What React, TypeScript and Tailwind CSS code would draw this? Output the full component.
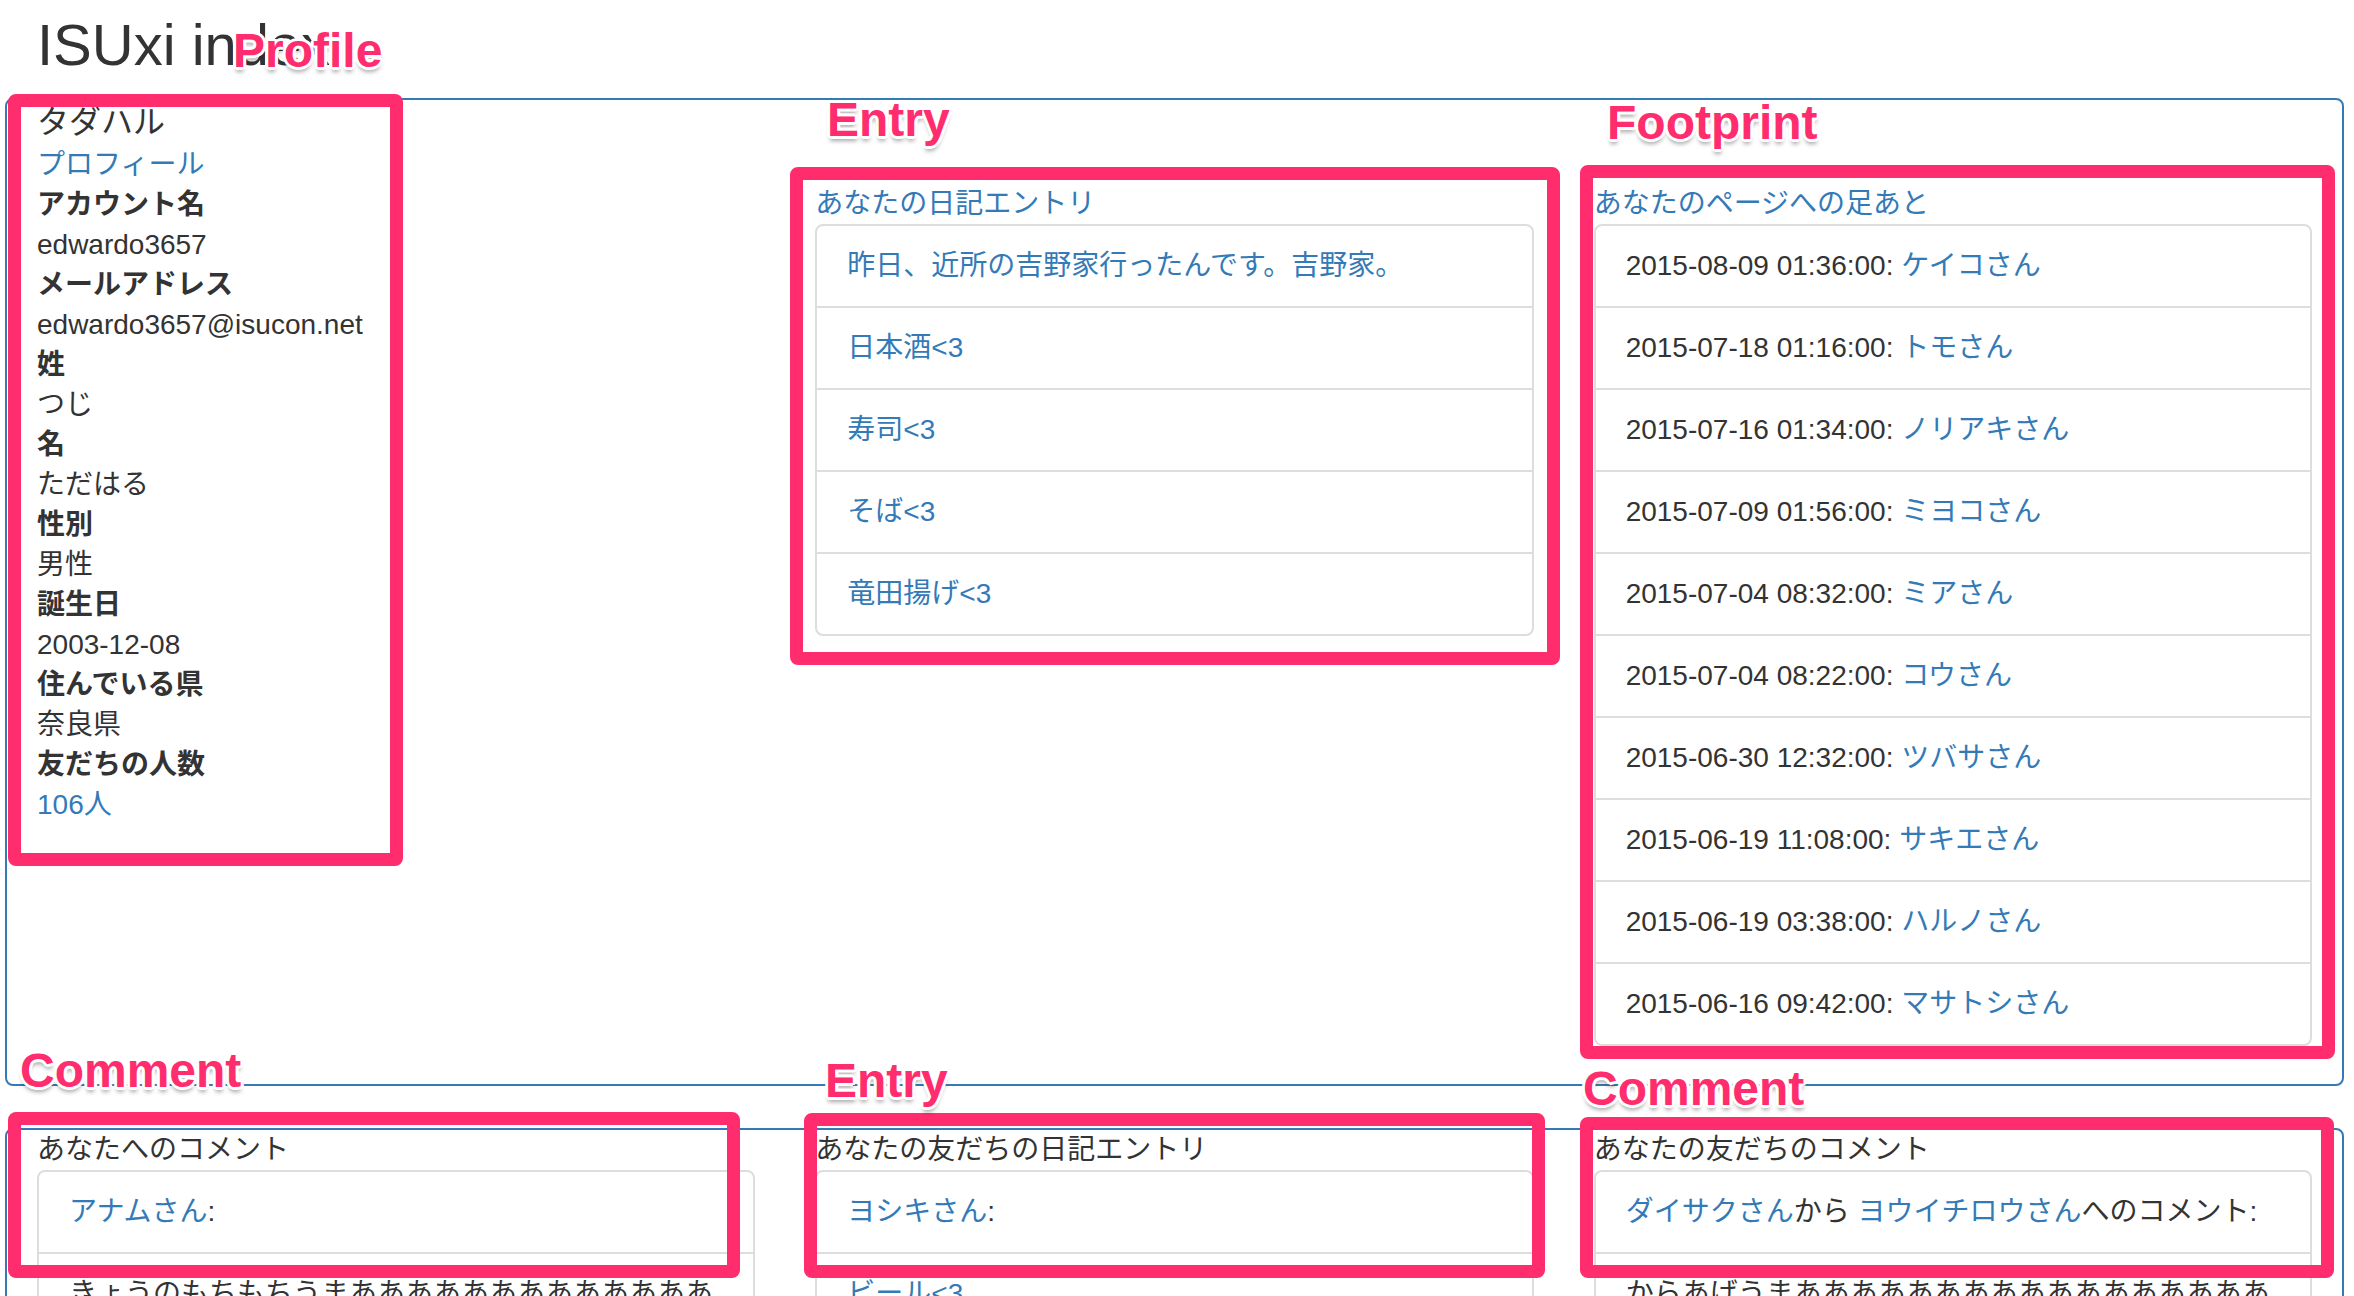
import React from 'react';

const link = 'text-[#337ab7]';

const profile: [string, string, boolean?][] = [
  ['アカウント名', 'edwardo3657'],
  ['メールアドレス', 'edwardo3657@isucon.net'],
  ['姓', 'つじ'],
  ['名', 'ただはる'],
  ['性別', '男性'],
  ['誕生日', '2003-12-08'],
  ['住んでいる県', '奈良県'],
  ['友だちの人数', '106人', true],
];

const entries = ['昨日、近所の吉野家行ったんです。吉野家。', '日本酒<3', '寿司<3', 'そば<3', '竜田揚げ<3'];

const footprints = [
  ['2015-08-09 01:36:00', 'ケイコさん'],
  ['2015-07-18 01:16:00', 'トモさん'],
  ['2015-07-16 01:34:00', 'ノリアキさん'],
  ['2015-07-09 01:56:00', 'ミヨコさん'],
  ['2015-07-04 08:32:00', 'ミアさん'],
  ['2015-07-04 08:22:00', 'コウさん'],
  ['2015-06-30 12:32:00', 'ツバサさん'],
  ['2015-06-19 11:08:00', 'サキエさん'],
  ['2015-06-19 03:38:00', 'ハルノさん'],
  ['2015-06-16 09:42:00', 'マサトシさん'],
];

const ListGroup = ({ children, className = '' }: { children: React.ReactNode; className?: string }) => (
  <ul className={`border-2 border-[#ddd] rounded-[8px] ${className}`}>{children}</ul>
);

const Item = ({ children }: { children: React.ReactNode }) => (
  <li className="px-[30px] py-[20px] border-t-2 border-[#ddd] first:border-t-0">{children}</li>
);

// 注釈（ピンクの枠とラベル）
const Box = ({ className }: { className: string }) => (
  <div className={`absolute border-[13px] border-[#ff2d6d] rounded-[8px] ${className}`} />
);

const Label = ({ text, className }: { text: string; className: string }) => (
  <div
    className={`absolute text-[48px] leading-none font-bold text-[#ff2d6d] [text-shadow:3px_0_0_#fff,-3px_0_0_#fff,0_3px_0_#fff,0_-3px_0_#fff,2px_2px_0_#fff,-2px_2px_0_#fff,2px_-2px_0_#fff,-2px_-2px_0_#fff,0_5px_4px_rgba(0,0,0,0.35)] ${className}`}
  >
    {text}
  </div>
);

export default function App() {
  return (
    <div className="relative w-[2354px] h-[1296px] overflow-hidden bg-white text-[#333] text-[28px] leading-[40px] font-['Liberation_Sans','Noto_Sans_CJK_JP',sans-serif]">
      <h1 className="mt-[13px] pl-[37px] text-[58px] leading-[64px] font-normal">ISUxi index</h1>

      {/* 上段 */}
      <div className="mt-[21px] ml-[5px] w-[2339px] border-2 border-[#337ab7] rounded-[8px] grid grid-cols-3">
        <div className="px-[30px]">
          <div className="text-[32px] leading-[45px]">タダハル</div>
          <div className={link}>プロフィール</div>
          {profile.map(([k, v, isLink]) => (
            <React.Fragment key={k}>
              <div className="font-bold">{k}</div>
              <div className={isLink ? link : ''}>{v}</div>
            </React.Fragment>
          ))}
        </div>

        <div className="px-[30px] pt-[84px]">
          <div className={link}>あなたの日記エントリ</div>
          <ListGroup>
            {entries.map((e) => (
              <Item key={e}>
                <span className={link}>{e}</span>
              </Item>
            ))}
          </ListGroup>
        </div>

        <div className="px-[30px] pt-[84px]">
          <div className={link}>あなたのページへの足あと</div>
          <ListGroup className="mb-[38px]">
            {footprints.map(([d, n]) => (
              <Item key={d}>
                {d}: <span className={link}>{n}</span>
              </Item>
            ))}
          </ListGroup>
        </div>
      </div>

      {/* 下段 */}
      <div className="mt-[42px] ml-[5px] w-[2339px] border-2 border-[#337ab7] rounded-[8px] grid grid-cols-3">
        <div className="px-[30px]">
          <div>あなたへのコメント</div>
          <ListGroup>
            <Item>
              <span className={link}>アナムさん</span>:
            </Item>
            <Item>きょうのもちもちうまあああああああああああああああああああああああああ</Item>
          </ListGroup>
        </div>
        <div className="px-[30px]">
          <div>あなたの友だちの日記エントリ</div>
          <ListGroup>
            <Item>
              <span className={link}>ヨシキさん</span>:
            </Item>
            <Item>
              <span className={link}>ビール&lt;3</span>
            </Item>
          </ListGroup>
        </div>
        <div className="px-[30px]">
          <div>あなたの友だちのコメント</div>
          <ListGroup>
            <Item>
              <span className={link}>ダイサクさん</span>から <span className={link}>ヨウイチロウさん</span>へのコメント:
            </Item>
            <Item>からあげうまああああああああああああああああああああああああああ</Item>
          </ListGroup>
        </div>
      </div>

      <Box className="left-[8px] top-[94px] w-[395px] h-[772px]" />
      <Box className="left-[790px] top-[167px] w-[770px] h-[498px]" />
      <Box className="left-[1580px] top-[165px] w-[755px] h-[894px]" />
      <Box className="left-[8px] top-[1112px] w-[732px] h-[166px]" />
      <Box className="left-[804px] top-[1113px] w-[741px] h-[165px]" />
      <Box className="left-[1580px] top-[1117px] w-[754px] h-[161px]" />

      <Label text="Profile" className="left-[233px] top-[27px]" />
      <Label text="Entry" className="left-[827px] top-[96px]" />
      <Label text="Footprint" className="left-[1607px] top-[99px]" />
      <Label text="Comment" className="left-[20px] top-[1047px]" />
      <Label text="Entry" className="left-[825px] top-[1057px]" />
      <Label text="Comment" className="left-[1583px] top-[1065px]" />
    </div>
  );
}
